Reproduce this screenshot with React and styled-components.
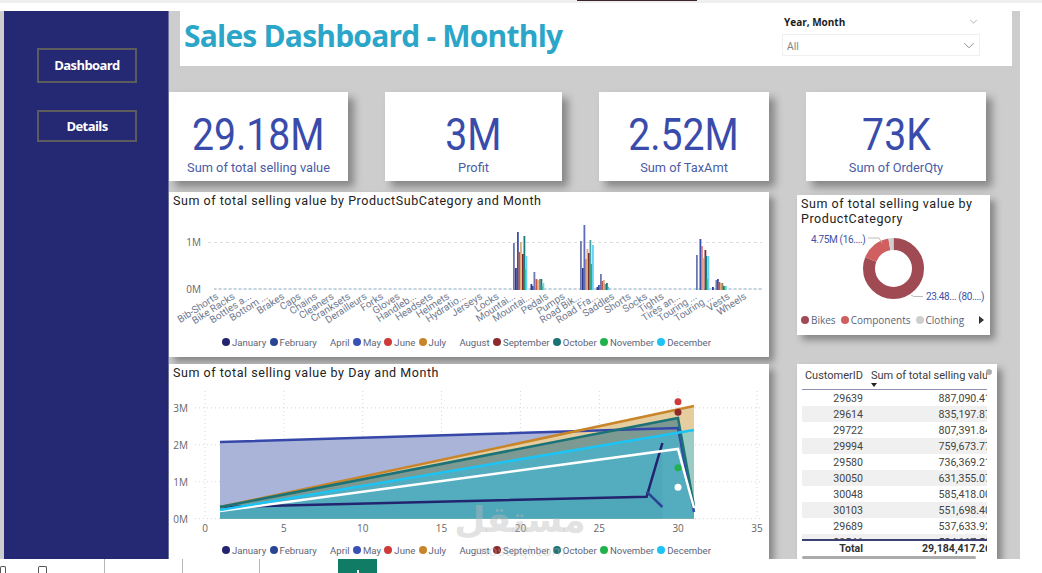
import styled, { createGlobalStyle } from "styled-components";

const GlobalStyle = createGlobalStyle`
    html, body {
        margin: 0;
        padding: 0;
        background: #fff;
        overflow: hidden;
    }
`;

const Page = styled.div`
    width: 1042px;
    height: 573px;
    display: flex;
    flex-direction: column;
    overflow: hidden;
    font-family: "Open Sans", sans-serif;
`;

const TopStrip = styled.div`
    height: 3px;
    margin-bottom: 8px;
    flex: none;
    background: #efefef;
    display: flex;
    justify-content: flex-start;
`;

const TopMark = styled.div`
    width: 120px;
    height: 1px;
    margin-left: 577px;
    background: #3c2430;
`;

const Canvas = styled.div`
    position: relative;
    width: 1020px;
    height: 548px;
    flex: none;
    box-sizing: border-box;
    padding-left: 4px;
    display: flex;
    background: #cdcdcd;
    overflow: hidden;
`;

const Sidebar = styled.nav`
    width: 165px;
    flex: none;
    box-sizing: border-box;
    padding: 37px 0 0 33px;
    display: flex;
    flex-direction: column;
    gap: 27px;
    background: #252872;
    border-right: 1px solid #6f729c;
`;

const NavButton = styled.div`
    width: 100px;
    height: ${(props) => props.$h}px;
    box-sizing: border-box;
    padding-bottom: 1px;
    display: flex;
    align-items: center;
    justify-content: center;
    border: 2px solid #5c5c5c;
    color: #fff;
    font-size: 13px;
    font-weight: 700;
    letter-spacing: -0.6px;
`;

const Main = styled.main`
    flex: 1;
    display: flex;
    flex-direction: column;
`;

const TitleBar = styled.header`
    width: 832px;
    height: 55px;
    margin-left: 11px;
    flex: none;
    display: flex;
    justify-content: space-between;
    background: #fff;
`;

const Heading = styled.h1`
    margin: 6px 0 0 4px;
    color: #2ba6c9;
    font-size: 30px;
    font-weight: 700;
    line-height: 38px;
    letter-spacing: -0.8px;
    white-space: nowrap;
`;

const Slicer = styled.div`
    width: 198px;
    margin-right: 32px;
    display: flex;
    flex-direction: column;
`;

const SlicerHead = styled.div`
    height: 23px;
    padding: 0 2px 2px;
    box-sizing: border-box;
    display: flex;
    align-items: center;
    justify-content: space-between;
    color: #1c1c1c;
    font-size: 10px;
    font-weight: 700;
`;

const SlicerBox = styled.div`
    height: 22px;
    box-sizing: border-box;
    padding: 1px 4px 0;
    display: flex;
    align-items: center;
    justify-content: space-between;
    border: 1px solid #efefef;
    color: #808080;
    font-size: 10.5px;
`;

const Chevron = styled.svg`
    flex: none;
    fill: none;
    stroke: #8a8a8a;
    stroke-width: 0.8;
`;

const KpiRow = styled.section`
    margin-top: 26px;
    display: flex;
    gap: 37px;
`;

const KpiCard = styled.div`
    width: ${(props) => props.$w}px;
    height: 89px;
    display: flex;
    flex-direction: column;
    align-items: center;
    background: #fff;
    box-shadow: 6px 6px 8px rgba(0, 0, 0, 0.35);
`;

const KpiValue = styled.div`
    margin-top: 18px;
    color: #3a4cab;
    font-family: Roboto, sans-serif;
    font-size: 45px;
    line-height: 50px;
    transform: scaleX(0.87);
`;

const KpiLabel = styled.div`
    margin-top: -1px;
    color: #4a5ca6;
    font-family: Roboto, sans-serif;
    font-size: 12.8px;
    line-height: 18px;
    white-space: nowrap;
`;

const Body = styled.section`
    margin-top: 11px;
    display: flex;
    gap: 28px;
`;

const LeftColumn = styled.div`
    width: 600px;
    display: flex;
    flex-direction: column;
    gap: 7px;
`;

const RightColumn = styled.div`
    padding-top: 3px;
    display: flex;
    flex-direction: column;
    gap: 29px;
`;

const ChartCard = styled.div`
    height: ${(props) => props.$h}px;
    display: flex;
    flex-direction: column;
    background: #fff;
    box-shadow: 5px 5px 7px rgba(0, 0, 0, 0.35);
`;

const ChartTitle = styled.div`
    padding: 0 4px 3px;
    color: #222;
    font-family: Roboto, sans-serif;
    font-size: 12.5px;
    font-weight: 400;
    line-height: 17px;
    letter-spacing: 0.55px;
`;

const PieTitle = styled(ChartTitle)`
    height: 30px;
    box-sizing: border-box;
    padding: 1px 4px 0;
    line-height: 15px;
`;

const Plot = styled.svg`
    display: block;
    flex: none;
`;

const AxisLabel = styled.text`
    fill: #666;
    font-family: "Open Sans", sans-serif;
    font-size: 10px;
`;

const CategoryLabel = styled.text`
    fill: #6f7a90;
    font-family: Roboto, sans-serif;
    font-size: 10px;
`;

const PieLabel = styled.text`
    fill: #3f52a8;
    font-family: Roboto, sans-serif;
    font-size: 10px;
    letter-spacing: -0.35px;
`;

const Legend = styled.div`
    height: 16px;
    margin-left: ${(props) => props.$left}px;
    display: flex;
    align-items: center;
    gap: ${(props) => props.$gap}px;
    color: #5d6478;
    font-family: Roboto, sans-serif;
    font-size: 9.6px;
    white-space: nowrap;
`;

const LegendItem = styled.div`
    display: flex;
    align-items: center;
    gap: 2px;
`;

const Dot = styled.span`
    width: 8px;
    height: 8px;
    flex: none;
    border-radius: 50%;
    background: ${(props) => props.$c};
`;

const PieCard = styled(ChartCard)`
    width: 193px;
`;

const PieLegend = styled(Legend)`
    color: #5b6478;
    font-family: "Open Sans", sans-serif;
    font-size: 10px;
`;

const Arrow = styled.span`
    margin-left: 10px;
    width: 0;
    height: 0;
    border-left: 5px solid #333;
    border-top: 4px solid transparent;
    border-bottom: 4px solid transparent;
`;

const TableCard = styled(ChartCard)`
    position: relative;
    width: 200px;
    box-sizing: border-box;
    padding: 0 10px 0 5px;
    color: #444;
    font-family: Roboto, sans-serif;
    font-size: 10.6px;
`;

const Grip = styled.span`
    position: absolute;
    top: 5px;
    right: 5px;
    width: 6px;
    height: 6px;
    border-radius: 50%;
    background: #b0b0b0;
`;

const Row = styled.div`
    height: ${(props) => props.$h || 16}px;
    flex: none;
    display: grid;
    grid-template-columns: 61px 1fr;
    column-gap: 8px;
    align-items: center;
    background: ${(props) => (props.$alt ? "#f0f0f0" : "transparent")};
`;

const HeadRow = styled(Row)`
    position: relative;
    height: 26px;
    padding-bottom: 3px;
    box-sizing: border-box;
    border-bottom: 1px solid #8d91b3;
    color: #3c3c3c;
    font-size: 11px;
`;

const SortMark = styled.span`
    position: absolute;
    left: 69px;
    bottom: 2px;
    width: 0;
    height: 0;
    border-top: 4px solid #222;
    border-left: 3.5px solid transparent;
    border-right: 3.5px solid transparent;
`;

const IdCell = styled.div`
    text-align: right;
    white-space: nowrap;
`;

const ValueCell = styled.div`
    display: flex;
    justify-content: ${(props) => (props.$start ? "flex-start" : "flex-end")};
    overflow: hidden;
    white-space: nowrap;
`;

const ValueText = styled.span`
    flex: none;
    margin-right: ${(props) => (props.$start ? 0 : -4)}px;
`;

const Rows = styled.div`
    height: 149px;
    flex: none;
    overflow: hidden;
`;

const TotalRow = styled(Row)`
    height: 17px;
    border-top: 2px solid #3c4173;
    box-sizing: border-box;
    color: #333;
    font-weight: 700;
`;

const ScrollThumb = styled.div`
    width: 174px;
    height: 8px;
    border-radius: 3px;
    background: #ababab;
`;

const Watermark = styled.div`
    position: absolute;
    left: 455px;
    top: 486px;
    width: 130px;
    display: flex;
    flex-direction: column;
    align-items: center;
    color: rgba(185, 185, 185, 0.42);
    pointer-events: none;
`;

const WatermarkArabic = styled.div`
    direction: rtl;
    font-family: "DejaVu Sans", sans-serif;
    font-size: 36px;
    font-weight: 700;
    line-height: 46px;
`;

const WatermarkLatin = styled.div`
    font-family: "Open Sans", sans-serif;
    font-size: 15px;
    line-height: 14px;
`;

const BottomBar = styled.footer`
    height: 14px;
    flex: none;
    display: flex;
`;

const SheetIcon = styled.span`
    width: ${(props) => props.$w}px;
    height: 8px;
    margin: 7px 0 0 ${(props) => props.$left}px;
    box-sizing: border-box;
    border: 1px solid #555;
    border-bottom: 0;
    border-radius: 2px 2px 0 0;
`;

const TabLine = styled.span`
    width: 1px;
    margin-left: ${(props) => props.$left}px;
    background: #b5b5b5;
`;

const AddSheet = styled.div`
    width: 39px;
    margin-left: 78px;
    display: flex;
    align-items: flex-end;
    justify-content: center;
    background: #107c65;
`;

const PlusStem = styled.span`
    width: 2px;
    height: 3px;
    background: #fff;
`;

const months = [
    ["January", "#23246f"],
    ["February", "#2a4596"],
    ["April", "#fff"],
    ["May", "#3a50b4"],
    ["June", "#cf3a3a"],
    ["July", "#c9852a"],
    ["August", "#fff"],
    ["September", "#8e2a2c"],
    ["October", "#1b7377"],
    ["November", "#22b24c"],
    ["December", "#1cc4f5"],
];

const categories = [
    "Bib-Shorts", "Bike Racks", "Bottles a...", "Bottom ...", "Brakes", "Caps", "Chains", "Cleaners",
    "Cranksets", "Derailleurs", "Forks", "Gloves", "Handleb...", "Headsets", "Helmets", "Hydratio...",
    "Jerseys", "Locks", "Mountai...", "Mountai...", "Pedals", "Pumps", "Road Bik...", "Road Fra...",
    "Saddles", "Shorts", "Socks", "Tights", "Tires an...", "Touring ...", "Touring ...", "Vests", "Wheels",
];

const PURPLE = "#6f76b0";
const NAVY = "#2a3a8c";
const BLUE = "#3b4fae";
const RED = "#c9553f";
const TAN = "#dcae7c";
const DARK = "#7e2a2f";
const TEAL = "#1b7b7e";
const GREEN = "#2eb05e";
const CYAN = "#62d2f6";

const bars = [
    [513, 243, PURPLE], [515, 268, NAVY], [517, 232, BLUE], [518.5, 252, RED], [520, 242, TAN], [522, 254, DARK], [523.5, 236, TEAL], [524.5, 269, GREEN], [525.5, 256, CYAN],
    [530.5, 284, NAVY], [532, 286, BLUE], [533.5, 272, PURPLE], [535.5, 279, RED], [537, 280, TAN], [539, 279, "#8d8d8d"], [540.5, 279, TEAL], [541.5, 286, GREEN], [542.5, 283, CYAN],
    [580, 241, PURPLE], [582, 268, NAVY], [583.5, 225, "#5d6cbd"], [585, 259, "#c88a5e"], [586.5, 249, TAN], [588, 253, DARK], [589.5, 240, "#4ba3a6"], [590.5, 264, GREEN], [592, 245, CYAN],
    [596.5, 287, NAVY], [598, 285, BLUE], [600, 274, PURPLE], [601.5, 281, RED], [603, 280, TAN], [604.5, 284, "#8d8d8d"], [606, 283, TEAL], [607, 287, GREEN], [608, 288, CYAN],
    [696, 255, PURPLE], [699.5, 239, BLUE], [701, 246, "#e0787a"], [702.5, 258, TAN], [704.5, 250, DARK], [705.5, 256, TEAL], [706.5, 279, GREEN], [707.5, 256, CYAN],
    [712, 287, NAVY], [715.5, 280, PURPLE], [717, 279, BLUE], [718.5, 282, RED], [720, 283, TAN], [721.5, 283, "#96806e"], [723, 286, TEAL], [724, 287, GREEN], [725, 286, CYAN],
];

const customers = [
    ["29639", "887,090.41"], ["29614", "835,197.87"], ["29722", "807,391.84"], ["29994", "759,673.77"],
    ["29580", "736,369.21"], ["30050", "631,355.07"], ["30048", "585,418.00"], ["30103", "551,698.40"],
    ["29689", "537,633.92"], ["29546", "534,117.50"],
];

const dayX = (d) => 205 + d * 15.77;
const valueY = (v) => 518.6 - v * 36.9;

function ChevronDown({ w, h }) {
    return (
        <Chevron width={w} height={h} viewBox="0 0 10 6">
            <path d="M1 1 L5 5 L9 1" />
        </Chevron>
    );
}

function MonthLegend() {
    return (
        <Legend $left={53} $gap={3.3}>
            {months.map(([name, color]) => (
                <LegendItem key={name}>
                    <Dot $c={color} />
                    {name}
                </LegendItem>
            ))}
        </Legend>
    );
}

function SubCategoryChart() {
    return (
        <ChartCard $h={165}>
            <ChartTitle>Sum of total selling value by ProductSubCategory and Month</ChartTitle>
            <Plot width="600" height="122" viewBox="169 212 600 122">
                <line x1="208" x2="762" y1="242.5" y2="242.5" stroke="#ddd" strokeDasharray="3 3" />
                <AxisLabel x="201" y="246" textAnchor="end">1M</AxisLabel>
                <AxisLabel x="201" y="293" textAnchor="end">0M</AxisLabel>
                <line x1="214" x2="762" y1="289" y2="289" stroke="#9aa1cb" strokeDasharray="2 3" />
                <line x1="216" x2="762" y1="289" y2="289" stroke="#e0bca9" strokeDasharray="1 4" />
                <line x1="218" x2="762" y1="289" y2="289" stroke="#a4e0ea" strokeDasharray="2 3" />
                {bars.map(([x, top, color]) => (
                    <rect key={x} x={x} y={top} width="1.8" height={290 - top} fill={color} />
                ))}
                {categories.map((name, i) => {
                    const x = 219 + i * 16.5;
                    return (
                        <CategoryLabel key={i} x={x} y={298} textAnchor="end" transform={`rotate(-33 ${x} 298)`}>
                            {name}
                        </CategoryLabel>
                    );
                })}
            </Plot>
            <MonthLegend />
        </ChartCard>
    );
}

function DayChart() {
    const base = valueY(0);
    return (
        <ChartCard $h={195}>
            <ChartTitle>Sum of total selling value by Day and Month</ChartTitle>
            <Plot width="600" height="158" viewBox="169 384 600 158">
                {[0, 5, 10, 15, 20, 25, 30, 35].map((d) => (
                    <g key={d}>
                        <line x1={dayX(d)} x2={dayX(d)} y1="391" y2={base} stroke="#d5d5d5" strokeDasharray="1 3" />
                        <AxisLabel x={dayX(d)} y="532" textAnchor="middle">{d}</AxisLabel>
                    </g>
                ))}
                {[0, 1, 2, 3].map((v) => (
                    <g key={v}>
                        <line x1="195" x2="760" y1={valueY(v)} y2={valueY(v)} stroke="#d5d5d5" strokeDasharray="1 3" />
                        <AxisLabel x="188" y={valueY(v) + 4} textAnchor="end">{v}M</AxisLabel>
                    </g>
                ))}
                <polygon points={`220,442 678,428 694,512 694,${base} 220,${base}`} fill="#aab3d8" />
                <polygon points={`220,507 694,406 694,${base} 220,${base}`} fill="#e6cda0" />
                <polygon points={`220,510 694,430 694,${base} 220,${base}`} fill="#9accc4" />
                <polygon points={`220,507 678,418 694,506 694,${base} 220,${base}`} fill="#7d9a92" />
                <polygon points={`220,510 680.7,432.3 694,506 694,${base} 220,${base}`} fill="#54adbf" />
                <polygon points={`220,509 646.6,497 662.4,443 662.4,${base} 220,${base}`} fill="#4fa7ba" />
                <polyline points="220,442 678,428 694,512" fill="none" stroke="#3547a8" strokeWidth="2.5" />
                <polyline points="220,507 646.6,496.7 662.4,443" fill="none" stroke="#23246f" strokeWidth="2.5" />
                <polyline points="646.6,491.7 662.4,507" fill="none" stroke="#2a4596" strokeWidth="2.5" />
                <polyline points="220,507 694,406" fill="none" stroke="#c9852a" strokeWidth="2.5" />
                <polyline points="220,507 678,418 694,506" fill="none" stroke="#1b7377" strokeWidth="2.5" />
                <polyline points="220,511 678,449 694,508" fill="none" stroke="#fff" strokeWidth="2.5" />
                <polyline points="220,510 694,430" fill="none" stroke="#1cc4f5" strokeWidth="2.5" />
                <circle cx="678" cy="401.7" r="3.5" fill="#cf3a3a" />
                <circle cx="678" cy="412.3" r="3.5" fill="#8e2a2c" />
                <circle cx="678" cy="467.7" r="3.5" fill="#22b24c" />
                <circle cx="678" cy="487.3" r="3.5" fill="#fff" />
            </Plot>
            <MonthLegend />
        </ChartCard>
    );
}

function CategoryPie() {
    const r = 24.5;
    const c = 2 * Math.PI * r;
    const slices = [
        ["#a04b53", 0, 0.805],
        ["#d05f60", 0.805, 0.161],
        ["#cfcfcf", 0.966, 0.034],
    ];
    return (
        <PieCard $h={140}>
            <PieTitle>Sum of total selling value by ProductCategory</PieTitle>
            <Plot width="193" height="87" viewBox="797 225 193 87">
                {slices.map(([color, start, share]) => (
                    <circle
                        key={color}
                        cx="893.5"
                        cy="268.5"
                        r={r}
                        fill="none"
                        stroke={color}
                        strokeWidth="12"
                        strokeDasharray={`${share * c} ${c}`}
                        strokeDashoffset={-start * c}
                        transform="rotate(-90 893.5 268.5)"
                    />
                ))}
                <polyline points="868,238 879,238 882,243" fill="none" stroke="#bbb" />
                <polyline points="911,295 914,296.5 923,296.5" fill="none" stroke="#bbb" />
                <PieLabel x="811" y="243">4.75M (16....)</PieLabel>
                <PieLabel x="926" y="300">23.48... (80....)</PieLabel>
            </Plot>
            <PieLegend $left={4} $gap={5}>
                <LegendItem><Dot $c="#a04b53" />Bikes</LegendItem>
                <LegendItem><Dot $c="#d05f60" />Components</LegendItem>
                <LegendItem><Dot $c="#cfcfcf" />Clothing</LegendItem>
                <Arrow />
            </PieLegend>
        </PieCard>
    );
}

function CustomerTable() {
    return (
        <TableCard $h={195}>
            <Grip />
            <HeadRow>
                <IdCell>CustomerID</IdCell>
                <ValueCell $start><ValueText $start>Sum of total selling value</ValueText></ValueCell>
                <SortMark />
            </HeadRow>
            <Rows>
                {customers.map(([id, value], i) => (
                    <Row key={id} $alt={i % 2 === 1}>
                        <IdCell>{id}</IdCell>
                        <ValueCell><ValueText>{value}</ValueText></ValueCell>
                    </Row>
                ))}
            </Rows>
            <TotalRow>
                <IdCell>Total</IdCell>
                <ValueCell><ValueText>29,184,417.26</ValueText></ValueCell>
            </TotalRow>
            <ScrollThumb />
        </TableCard>
    );
}

const kpis = [
    ["29.18M", "Sum of total selling value", 179],
    ["3M", "Profit", 177],
    ["2.52M", "Sum of TaxAmt", 170],
    ["73K", "Sum of OrderQty", 180],
];

export default function App() {
    return (
        <Page>
            <GlobalStyle />
            <TopStrip><TopMark /></TopStrip>
            <Canvas>
                <Sidebar>
                    <NavButton $h={35}>Dashboard</NavButton>
                    <NavButton $h={32}>Details</NavButton>
                </Sidebar>
                <Main>
                    <TitleBar>
                        <Heading>Sales Dashboard - Monthly</Heading>
                        <Slicer>
                            <SlicerHead>
                                Year, Month
                                <ChevronDown w={9} h={5} />
                            </SlicerHead>
                            <SlicerBox>
                                All
                                <ChevronDown w={12} h={7} />
                            </SlicerBox>
                        </Slicer>
                    </TitleBar>
                    <KpiRow>
                        {kpis.map(([value, label, width]) => (
                            <KpiCard key={label} $w={width}>
                                <KpiValue>{value}</KpiValue>
                                <KpiLabel>{label}</KpiLabel>
                            </KpiCard>
                        ))}
                    </KpiRow>
                    <Body>
                        <LeftColumn>
                            <SubCategoryChart />
                            <DayChart />
                        </LeftColumn>
                        <RightColumn>
                            <CategoryPie />
                            <CustomerTable />
                        </RightColumn>
                    </Body>
                </Main>
                <Watermark>
                    <WatermarkArabic>مستقل</WatermarkArabic>
                    <WatermarkLatin>mostaql.com</WatermarkLatin>
                </Watermark>
            </Canvas>
            <BottomBar>
                <SheetIcon $w={6} $left={0} />
                <SheetIcon $w={9} $left={32} />
                <TabLine $left={57} />
                <TabLine $left={77} />
                <TabLine $left={76} />
                <AddSheet><PlusStem /></AddSheet>
            </BottomBar>
        </Page>
    );
}
